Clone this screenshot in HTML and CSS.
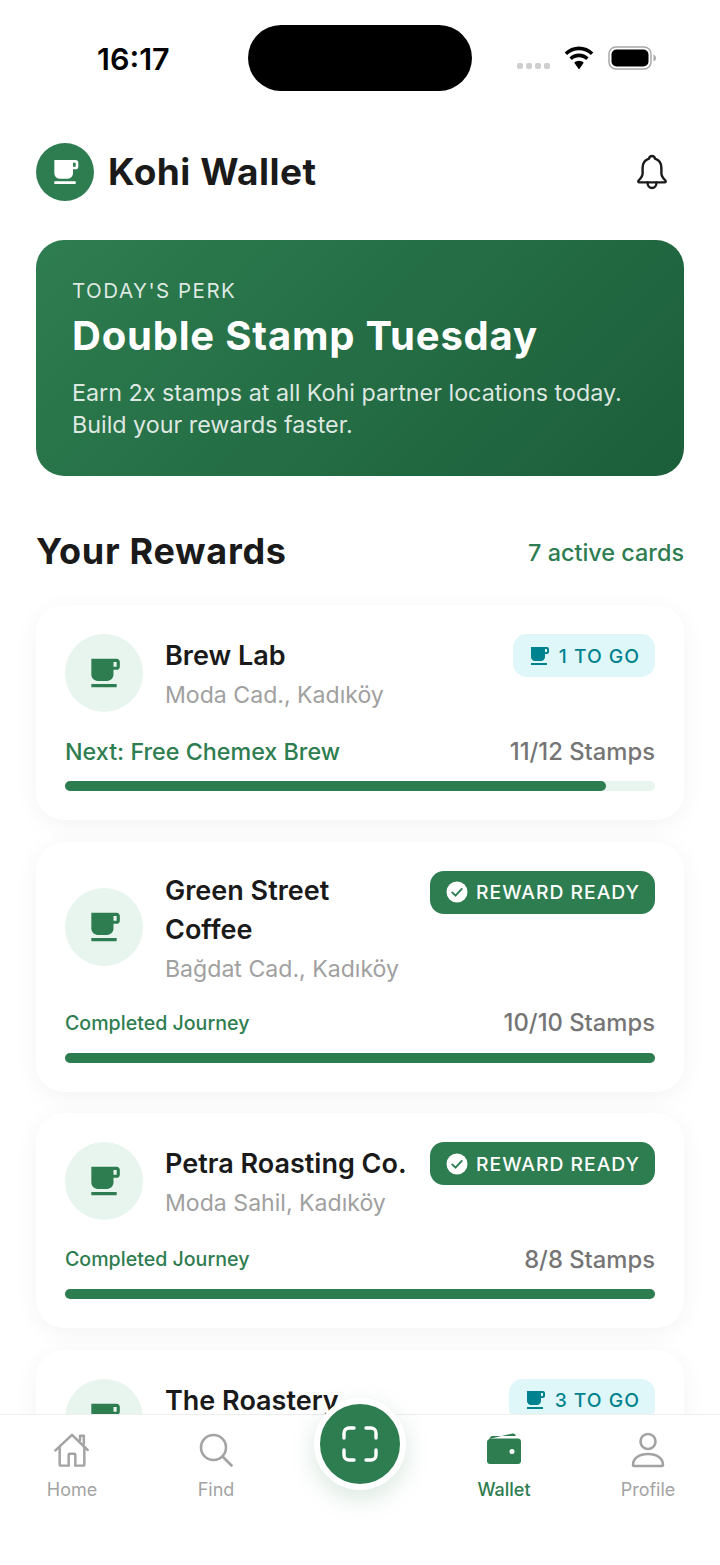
FILE: index.html
```html
<!DOCTYPE html>
<html>
<head>
<meta charset="UTF-8">
<title>Kohi Wallet</title>
<link rel="stylesheet" href="styles.css">
</head>
<body>
<svg class="defs">
	<symbol id="cup" viewBox="0 0 24 24">
		<path d="M20 3H4v10c0 2.21 1.79 4 4 4h6c2.21 0 4-1.79 4-4v-3h2c1.11 0 2-.9 2-2V5c0-1.11-.89-2-2-2zm0 5h-2V5h2v3zM4 19h16v2H4z"/>
	</symbol>
	<symbol id="check" viewBox="0 0 24 24">
		<circle cx="13" cy="12" r="10.500" fill="#fff"/>
		<path d="M8.200 12.400l3.300 3.300 6.300-6.800" fill="none" stroke="#2e7d50" stroke-width="1.900" stroke-linecap="round" stroke-linejoin="round"/>
	</symbol>
</svg>

<div id="screen">

	<div class="status">
		<span class="time">16:17</span>
		<div class="island"></div>
		<div class="status-right">
			<div class="signal"><i></i><i></i><i></i><i></i></div>
			<svg class="wifi" viewBox="0 0 32 24">
				<path d="M16 4.200c4.600 0 8.800 1.800 11.900 4.800l2.400-2.600C26.500 2.700 21.500.4 16 .4S5.500 2.700 1.700 6.400l2.400 2.600C7.200 6 11.400 4.200 16 4.200z"/>
				<path d="M16 11.300c2.700 0 5.200 1 7.100 2.800l2.500-2.700C23.100 9 19.700 7.600 16 7.600s-7.100 1.400-9.600 3.800l2.500 2.700c1.900-1.800 4.400-2.800 7.100-2.800z"/>
				<path d="M16 14.800c-1.800 0-3.500.7-4.700 1.900L16 23.400l4.700-6.700c-1.200-1.200-2.900-1.900-4.700-1.900z"/>
			</svg>
			<svg class="battery" viewBox="0 0 48 24">
				<rect x="1" y="1" width="42" height="22" rx="7" fill="none" stroke="#a8a8a8" stroke-width="1.500"/>
				<rect x="3.500" y="3.500" width="37" height="17" rx="5"/>
				<path d="M45.500 8.500c1.500.5 2.500 2 2.500 3.500s-1 3-2.500 3.500z" fill="#a8a8a8"/>
			</svg>
		</div>
	</div>

	<div class="header">
		<div class="logo"><svg><use href="#cup"/></svg></div>
		<h1>Kohi Wallet</h1>
		<svg class="bell" viewBox="0 0 32 36" fill="none" stroke="#1a1a1a" stroke-width="2.400" stroke-linejoin="round" stroke-linecap="round">
			<path d="M16 2c-1.700 0-2.700 1.100-3 2.700C8.800 6 6.600 9.600 6.600 14v5.500c0 2.500-1.500 4.500-4 7-.7.700-.3 1.900.8 1.900h25.200c1.100 0 1.500-1.200.8-1.900-2.500-2.500-4-4.500-4-7V14c0-4.400-2.200-8-6.400-9.300C18.700 3.100 17.700 2 16 2z"/>
			<path d="M11.500 28.500c0 3 2 5.500 4.500 5.500s4.500-2.500 4.500-5.500"/>
		</svg>
	</div>

	<div class="perk">
		<div class="perk-label">TODAY'S PERK</div>
		<div class="perk-title">Double Stamp Tuesday</div>
		<p>Earn 2x stamps at all Kohi partner locations today.<br>Build your rewards faster.</p>
	</div>

	<div class="section-head">
		<h2>Your Rewards</h2>
		<span>7 active cards</span>
	</div>

	<div class="cards">

		<div class="card">
			<div class="card-top">
				<div class="thumb"><svg><use href="#cup"/></svg></div>
				<div class="info">
					<div class="name">Brew Lab</div>
					<div class="place">Moda Cad., Kadıköy</div>
				</div>
				<div class="badge togo"><svg><use href="#cup"/></svg>1 TO GO</div>
			</div>
			<div class="card-row">
				<span class="next">Next: Free Chemex Brew</span>
				<span class="count">11/12 Stamps</span>
			</div>
			<div class="bar"><div class="fill" style="width: 91.700%"></div></div>
		</div>

		<div class="card">
			<div class="card-top">
				<div class="thumb"><svg><use href="#cup"/></svg></div>
				<div class="info">
					<div class="name">Green Street Coffee</div>
					<div class="place">Bağdat Cad., Kadıköy</div>
				</div>
				<div class="badge ready"><svg><use href="#check"/></svg>REWARD READY</div>
			</div>
			<div class="card-row">
				<span class="done">Completed Journey</span>
				<span class="count">10/10 Stamps</span>
			</div>
			<div class="bar"><div class="fill" style="width: 100%"></div></div>
		</div>

		<div class="card">
			<div class="card-top">
				<div class="thumb"><svg><use href="#cup"/></svg></div>
				<div class="info">
					<div class="name">Petra Roasting Co.</div>
					<div class="place">Moda Sahil, Kadıköy</div>
				</div>
				<div class="badge ready"><svg><use href="#check"/></svg>REWARD READY</div>
			</div>
			<div class="card-row">
				<span class="done">Completed Journey</span>
				<span class="count">8/8 Stamps</span>
			</div>
			<div class="bar"><div class="fill" style="width: 100%"></div></div>
		</div>

		<div class="card">
			<div class="card-top">
				<div class="thumb"><svg><use href="#cup"/></svg></div>
				<div class="info">
					<div class="name">The Roastery</div>
					<div class="place">Caferağa, Kadıköy</div>
				</div>
				<div class="badge togo"><svg><use href="#cup"/></svg>3 TO GO</div>
			</div>
		</div>

	</div>

	<div class="nav">
		<div class="tab">
			<svg viewBox="0 0 38 36" fill="none" stroke="#a3a3a3" stroke-width="2.600" stroke-linejoin="round" stroke-linecap="round">
				<path d="M1.500 18.500L19 2l16.500 16"/>
				<path d="M6 15v18.500c0 .6.400 1 1 1h8.500V23c0-.6.400-1 1-1h5c.6 0 1 .400 1 1v11.500H31c.6 0 1-.400 1-1V15"/>
				<path d="M27.500 7.500V3h4v8.500"/>
			</svg>
			<span>Home</span>
		</div>
		<div class="tab">
			<svg viewBox="0 0 36 36" fill="none" stroke="#a3a3a3" stroke-width="2.600" stroke-linecap="round">
				<circle cx="15.500" cy="15.500" r="12.500"/>
				<path d="M24.500 24.500l9 9"/>
			</svg>
			<span>Find</span>
		</div>
		<div class="tab">
			<div class="scan">
				<svg viewBox="0 0 36 36" fill="none" stroke="#fff" stroke-width="3.400" stroke-linecap="round">
					<path d="M2 12V7a5 5 0 0 1 5-5h5"/>
					<path d="M24 2h5a5 5 0 0 1 5 5v5"/>
					<path d="M34 24v5a5 5 0 0 1-5 5h-5"/>
					<path d="M12 34H7a5 5 0 0 1-5-5v-5"/>
				</svg>
			</div>
		</div>
		<div class="tab on">
			<svg viewBox="0 0 36 36">
				<path d="M3 7L26.500 1.500c1.800-.3 3 .6 3.300 2.500H6.500C5 4 3.800 5.500 3 7z" fill="#2e7d50"/>
				<path d="M6 6.500h26c1.700 0 3 1.300 3 3V29c0 1.700-1.300 3-3 3H4c-1.700 0-3-1.300-3-3V10C1 8 3.500 6.500 6 6.500z" fill="#2e7d50"/>
				<circle cx="26" cy="19.500" r="2.500" fill="#fff"/>
			</svg>
			<span>Wallet</span>
		</div>
		<div class="tab">
			<svg viewBox="0 0 36 36" fill="none" stroke="#a3a3a3" stroke-width="2.600" stroke-linejoin="round">
				<circle cx="18" cy="9.500" r="7.500"/>
				<path d="M3 33c0-6.500 6-11 15-11s15 4.500 15 11c0 .6-.400 1-1 1H4c-.6 0-1-.400-1-1z"/>
			</svg>
			<span>Profile</span>
		</div>
	</div>

</div>
</body>
</html>
```

FILE: styles.css
```css
body {
	margin: 0;
	padding: 0;
	background: #fff;
	font-family: Inter, "Noto Sans", sans-serif;
	color: #1a1a1a;
}

.defs {
	display: none;
}

#screen {
	position: relative;
	width: 720px;
	height: 1565px;
	overflow: hidden;
	background: #fff;
}

/* status bar */
.status {
	height: 116px;
	position: relative;
}

.time {
	position: absolute;
	left: 97px;
	top: 41px;
	font-size: 30.500px;
	line-height: 36px;
	font-weight: 600;
	color: #000;
}

.island {
	position: absolute;
	left: 248px;
	top: 25px;
	width: 224px;
	height: 66px;
	border-radius: 33px;
	background: #000;
}

.status-right {
	position: absolute;
	left: 517px;
	top: 46px;
	display: flex;
	align-items: flex-start;
}

.signal {
	display: flex;
	gap: 3px;
	margin-top: 17px;
	width: 46px;
}

.signal i {
	width: 6px;
	height: 6px;
	border-radius: 2px;
	background: #cfcfcf;
}

.wifi {
	width: 32px;
	height: 24px;
	fill: #000;
}

.battery {
	width: 48px;
	height: 24px;
	margin-left: 13px;
	fill: #000;
}

/* header */
.header {
	display: flex;
	align-items: center;
	padding: 27px 36px 0;
}

.logo {
	width: 58px;
	height: 58px;
	border-radius: 50%;
	background: #2e7d50;
	display: flex;
	align-items: center;
	justify-content: center;
}

.logo svg {
	width: 32px;
	height: 32px;
	fill: #fff;
}

h1 {
	margin: 0 0 0 14px;
	flex: 1;
	font-size: 37px;
	font-weight: 700;
	line-height: 44px;
	letter-spacing: 0.5px;
}

.bell {
	width: 32px;
	height: 36px;
	margin-right: 16px;
}

/* perk banner */
.perk {
	margin: 39px 36px 0;
	height: 236px;
	box-sizing: border-box;
	padding: 36px 36px 0;
	border-radius: 28px;
	background: linear-gradient(135deg, #2e7d50, #1b5e3a);
	color: #fff;
}

.perk-label {
	font-size: 20.500px;
	line-height: 30px;
	letter-spacing: 1.500px;
	color: rgba(255, 255, 255, 0.85);
}

.perk-title {
	margin-top: 4px;
	font-size: 40px;
	line-height: 52px;
	font-weight: 700;
	letter-spacing: 0.800px;
}

.perk p {
	margin: 15px 0 0;
	font-size: 23.300px;
	line-height: 32px;
	color: rgba(255, 255, 255, 0.85);
}

/* rewards */
.section-head {
	display: flex;
	align-items: center;
	justify-content: space-between;
	margin: 53px 36px 0;
	height: 46px;
}

h2 {
	margin: 0 0 2px;
	font-size: 36px;
	font-weight: 700;
	letter-spacing: 0.700px;
}

.section-head span {
	font-size: 23.400px;
	font-weight: 500;
	color: #2e7d50;
}

.cards {
	display: flex;
	flex-direction: column;
	gap: 21.500px;
	margin: 30px 36px 0;
}

.card {
	padding: 29px;
	border-radius: 28px;
	background: #fff;
	box-shadow: 0 4px 24px rgba(0, 0, 0, 0.05);
}

.card-top {
	display: flex;
	align-items: center;
}

.thumb {
	flex: none;
	width: 78px;
	height: 78px;
	border-radius: 50%;
	background: #e8f4ee;
	display: flex;
	align-items: center;
	justify-content: center;
}

.thumb svg {
	width: 38px;
	height: 38px;
	fill: #2e7d50;
}

.info {
	flex: 1;
	min-width: 0;
	margin: 0 16px 0 22px;
}

.name {
	font-size: 27px;
	line-height: 39px;
	font-weight: 600;
}

.place {
	margin-top: 5px;
	font-size: 23.100px;
	line-height: 30px;
	color: #a0a0a0;
}

.badge {
	flex: none;
	align-self: flex-start;
	display: flex;
	align-items: center;
	gap: 8px;
	height: 43px;
	padding: 0 15px 0 14px;
	border-radius: 14px;
	font-size: 19.300px;
	font-weight: 500;
	letter-spacing: 1px;
}

.badge svg {
	width: 24px;
	height: 24px;
}

.togo {
	background: #e0f7fa;
	color: #00838f;
}

.togo svg {
	fill: #00838f;
}

.ready {
	background: #2e7d50;
	color: #fff;
}

.card-row {
	display: flex;
	align-items: center;
	justify-content: space-between;
	height: 28px;
	margin-top: 25px;
}

.next {
	font-size: 23.300px;
	font-weight: 500;
	color: #2e7d50;
}

.done {
	font-size: 19.600px;
	font-weight: 500;
	color: #2e7d50;
}

.count {
	font-size: 23.800px;
	font-weight: 500;
	color: #757575;
}

.bar {
	height: 10px;
	margin-top: 16px;
	border-radius: 5px;
	background: #e8f4ee;
}

.fill {
	height: 10px;
	border-radius: 5px;
	background: #2e7d50;
}

/* bottom tabs */
.nav {
	position: absolute;
	left: 0;
	right: 0;
	bottom: 0;
	height: 151px;
	box-sizing: border-box;
	border-top: 1px solid #eeeeee;
	background: #fff;
	display: grid;
	grid-template-columns: repeat(5, 1fr);
}

.tab {
	display: flex;
	flex-direction: column;
	align-items: center;
	padding-top: 17px;
	font-size: 18px;
	font-weight: 400;
	color: #a3a3a3;
}

.tab svg {
	width: 36px;
	height: 36px;
}

.tab span {
	margin-top: 9px;
	line-height: 26px;
}

.tab.on {
	color: #2e7d50;
	font-weight: 500;
}

.scan {
	width: 80px;
	height: 80px;
	margin-top: -34px;
	border: 6px solid #fff;
	border-radius: 50%;
	background: #2e7d50;
	box-shadow: 0 8px 24px rgba(46, 125, 80, 0.18);
	display: flex;
	align-items: center;
	justify-content: center;
	flex: none;
}
```
